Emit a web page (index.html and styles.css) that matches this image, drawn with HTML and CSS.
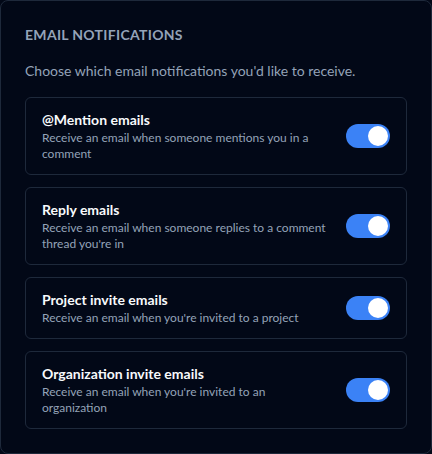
FILE: index.html
```html
<!DOCTYPE html>
<html lang="en">

<head>
    <meta charset="UTF-8">
    <meta name="viewport" content="width=device-width, initial-scale=1.0">
    <title>Email notifications</title>

    <link rel="stylesheet" href="styles.css">
</head>

<body>
    <div class="card">
        <h2 class="cardTitle">Email Notifications</h2>
        <p class="cardIntro">Choose which email notifications you'd like to receive.</p>

        <div class="options">
            <div class="option">
                <div class="optionText">
                    <div class="optionName">@Mention emails</div>
                    <div class="optionDesc">Receive an email when someone mentions you in a comment</div>
                </div>
                <div class="switch on"><span class="knob"></span></div>
            </div>

            <div class="option">
                <div class="optionText">
                    <div class="optionName">Reply emails</div>
                    <div class="optionDesc">Receive an email when someone replies to a comment thread you're in</div>
                </div>
                <div class="switch on"><span class="knob"></span></div>
            </div>

            <div class="option">
                <div class="optionText">
                    <div class="optionName">Project invite emails</div>
                    <div class="optionDesc">Receive an email when you're invited to a project</div>
                </div>
                <div class="switch on"><span class="knob"></span></div>
            </div>

            <div class="option">
                <div class="optionText">
                    <div class="optionName">Organization invite emails</div>
                    <div class="optionDesc">Receive an email when you're invited to an organization</div>
                </div>
                <div class="switch on"><span class="knob"></span></div>
            </div>
        </div>
    </div>
</body>

</html>
```

FILE: styles.css
```css
body {
    margin: 0;
    background-color: #020817;
    font-family: Lato, "Noto Sans", sans-serif;
    color: #f8fafc;
}

.card {
    box-sizing: border-box;
    height: 454px;
    padding: 24px;
    border: 1px solid #1e293b;
    border-radius: 8px;
    background-color: #020817;
}

.cardTitle {
    margin: 0;
    font-size: 14px;
    line-height: 20px;
    font-weight: 700;
    letter-spacing: 0.3px;
    text-transform: uppercase;
    color: #94a3b8;
}

.cardIntro {
    margin: 16px 0 16px 0;
    font-size: 14px;
    line-height: 20px;
    color: #94a3b8;
}

.options {
    display: flex;
    flex-direction: column;
    gap: 12px;
}

.option {
    display: flex;
    align-items: center;
    gap: 16px;
    padding: 12px 16px;
    border: 1px solid #1e293b;
    border-radius: 6px;
}

.optionText {
    flex: 1;
}

.optionName {
    font-size: 14px;
    line-height: 20px;
    font-weight: 700;
    color: #f8fafc;
}

.optionDesc {
    font-size: 12px;
    line-height: 16px;
    color: #94a3b8;
}

.switch {
    flex-shrink: 0;
    box-sizing: border-box;
    width: 44px;
    height: 24px;
    padding: 2px;
    border-radius: 12px;
    background-color: #1e293b;
    display: flex;
}

.switch.on {
    background-color: #3b82f6;
    justify-content: flex-end;
}

.knob {
    width: 20px;
    height: 20px;
    border-radius: 50%;
    background-color: #fff;
}
```
